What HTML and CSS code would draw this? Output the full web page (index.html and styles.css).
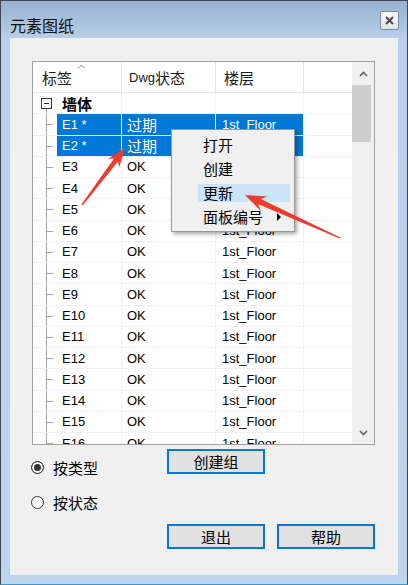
FILE: index.html
```html
<!DOCTYPE html>
<html lang="zh-CN">
<head>
  <meta charset="UTF-8" />
  <title>元素图纸</title>
  <link rel="stylesheet" href="styles.css">
</head>
<body>

<div class="window">
  <!-- Title bar -->
  <div class="titlebar">
    <span class="title">元素图纸</span>
    <span class="close">
      <svg width="9" height="9" viewBox="0 0 9 9"><path d="M1 1 L8 8 M8 1 L1 8" stroke="#4a4a4a" stroke-width="2"/></svg>
    </span>
  </div>

  <div class="client">
    <!-- List view -->
    <div class="list">
      <div class="list-body">
        <div class="row head">
          <div class="cell c1"><span class="zh">标签</span>
            <svg class="sort" width="9" height="5" viewBox="0 0 9 5"><path d="M1 4.5 L4.5 1 L8 4.5" fill="none" stroke="#8a8a8a"/></svg>
          </div>
          <div class="cell c2">Dwg<span class="zh">状态</span></div>
          <div class="cell c3"><span class="zh">楼层</span></div>
          <div class="cell c4"></div>
        </div>

        <div class="row group">
          <div class="cell c1"><span class="gutter root"><span class="toggle"></span></span><span class="label zh">墙体</span></div>
          <div class="cell c2"></div>
          <div class="cell c3"></div>
          <div class="cell c4"></div>
        </div>

        <div class="row sel">
          <div class="cell c1"><span class="gutter"></span><span class="label">E1 *</span></div>
          <div class="cell c2"><span class="zh">过期</span></div>
          <div class="cell c3">1st_Floor</div>
          <div class="cell c4"></div>
        </div>
        <div class="row sel">
          <div class="cell c1"><span class="gutter"></span><span class="label">E2 *</span></div>
          <div class="cell c2"><span class="zh">过期</span></div>
          <div class="cell c3">1st_Floor</div>
          <div class="cell c4"></div>
        </div>
        <div class="row">
          <div class="cell c1"><span class="gutter"></span><span class="label">E3</span></div>
          <div class="cell c2">OK</div><div class="cell c3">1st_Floor</div><div class="cell c4"></div>
        </div>
        <div class="row">
          <div class="cell c1"><span class="gutter"></span><span class="label">E4</span></div>
          <div class="cell c2">OK</div><div class="cell c3">1st_Floor</div><div class="cell c4"></div>
        </div>
        <div class="row">
          <div class="cell c1"><span class="gutter"></span><span class="label">E5</span></div>
          <div class="cell c2">OK</div><div class="cell c3">1st_Floor</div><div class="cell c4"></div>
        </div>
        <div class="row">
          <div class="cell c1"><span class="gutter"></span><span class="label">E6</span></div>
          <div class="cell c2">OK</div><div class="cell c3">1st_Floor</div><div class="cell c4"></div>
        </div>
        <div class="row">
          <div class="cell c1"><span class="gutter"></span><span class="label">E7</span></div>
          <div class="cell c2">OK</div><div class="cell c3">1st_Floor</div><div class="cell c4"></div>
        </div>
        <div class="row">
          <div class="cell c1"><span class="gutter"></span><span class="label">E8</span></div>
          <div class="cell c2">OK</div><div class="cell c3">1st_Floor</div><div class="cell c4"></div>
        </div>
        <div class="row">
          <div class="cell c1"><span class="gutter"></span><span class="label">E9</span></div>
          <div class="cell c2">OK</div><div class="cell c3">1st_Floor</div><div class="cell c4"></div>
        </div>
        <div class="row">
          <div class="cell c1"><span class="gutter"></span><span class="label">E10</span></div>
          <div class="cell c2">OK</div><div class="cell c3">1st_Floor</div><div class="cell c4"></div>
        </div>
        <div class="row">
          <div class="cell c1"><span class="gutter"></span><span class="label">E11</span></div>
          <div class="cell c2">OK</div><div class="cell c3">1st_Floor</div><div class="cell c4"></div>
        </div>
        <div class="row">
          <div class="cell c1"><span class="gutter"></span><span class="label">E12</span></div>
          <div class="cell c2">OK</div><div class="cell c3">1st_Floor</div><div class="cell c4"></div>
        </div>
        <div class="row">
          <div class="cell c1"><span class="gutter"></span><span class="label">E13</span></div>
          <div class="cell c2">OK</div><div class="cell c3">1st_Floor</div><div class="cell c4"></div>
        </div>
        <div class="row">
          <div class="cell c1"><span class="gutter"></span><span class="label">E14</span></div>
          <div class="cell c2">OK</div><div class="cell c3">1st_Floor</div><div class="cell c4"></div>
        </div>
        <div class="row">
          <div class="cell c1"><span class="gutter"></span><span class="label">E15</span></div>
          <div class="cell c2">OK</div><div class="cell c3">1st_Floor</div><div class="cell c4"></div>
        </div>
        <div class="row">
          <div class="cell c1"><span class="gutter"></span><span class="label">E16</span></div>
          <div class="cell c2">OK</div><div class="cell c3">1st_Floor</div><div class="cell c4"></div>
        </div>
      </div>

      <!-- Scrollbar -->
      <div class="scroll">
        <div class="sb-btn">
          <svg width="9" height="6" viewBox="0 0 9 6"><path d="M1 5 L4.5 1.5 L8 5" fill="none" stroke="#606060" stroke-width="1.6"/></svg>
        </div>
        <div class="thumb"></div>
        <div class="track"></div>
        <div class="sb-btn">
          <svg width="9" height="6" viewBox="0 0 9 6"><path d="M1 1 L4.5 4.5 L8 1" fill="none" stroke="#606060" stroke-width="1.6"/></svg>
        </div>
      </div>
    </div>

    <!-- Bottom controls -->
    <div class="bottom">
      <div class="options">
        <label class="radio"><span class="dot checked"></span><span>按类型</span></label>
        <label class="radio"><span class="dot"></span><span>按状态</span></label>
      </div>
      <div class="actions">
        <button class="btn">创建组</button>
        <div class="btn-row">
          <button class="btn">退出</button>
          <button class="btn">帮助</button>
        </div>
      </div>
    </div>
  </div>

  <!-- Context menu -->
  <div class="menu">
    <div class="menu-item">打开</div>
    <div class="menu-item">创建</div>
    <div class="menu-item hover">更新</div>
    <div class="menu-item sub">面板编号<span class="caret"></span></div>
  </div>

  <!-- Annotation arrows -->
  <svg class="marks" width="408" height="585" viewBox="0 0 408 585">
    <polygon fill="#ef3b2d" points="82.6,205.4 118,161.5 119.2,167.4 125,148 108,159 114,158.5 81.4,204.6"/>
    <polygon fill="#ef3b2d" points="340.3,237.4 260.8,198.9 267.4,196.4 245,195 260.8,210.9 258.3,204.3 339.7,238.6"/>
  </svg>
</div>

</body>
</html>
```

FILE: styles.css
```css
* {
  box-sizing: border-box;
}

body {
  margin: 0;
  font-family: "Liberation Sans", "Noto Sans CJK SC", sans-serif;
  background: #fff;
}

.zh {
  font-family: "Noto Sans CJK SC", sans-serif;
  font-size: 15px;
}

.window {
  position: relative;
  width: 408px;
  height: 585px;
  border: 1px solid #3f4650;
  border-bottom-color: #4796c4;
  background: linear-gradient(#97b1cf, #b8d0e9 38px, #bcd4ec);
  display: flex;
  flex-direction: column;
}

/* title bar */
.titlebar {
  height: 37px;
  flex: none;
  display: flex;
  justify-content: space-between;
  align-items: flex-start;
  padding: 10px 8px 0 9px;
}

.title {
  margin-top: 4px;
  line-height: 20px;
  font-family: "Noto Sans CJK SC", sans-serif;
  font-size: 16px;
  color: #111;
}

.close {
  width: 19px;
  height: 19px;
  border: 1px solid #7b8a9c;
  border-radius: 2px;
  background: linear-gradient(#f6f7f9, #dfe5ec);
  display: flex;
  align-items: center;
  justify-content: center;
}

.client {
  flex: none;
  height: 537px;
  margin: 0 9px;
  background: #f0f0f0;
}

/* list view */
.list {
  margin: 23px 0 0 22px;
  width: 343px;
  height: 384px;
  border: 1px solid #a0a0a0;
  background: #fff;
  display: flex;
}

.list-body {
  flex: 1;
  overflow: hidden;
}

.row {
  display: grid;
  grid-template-columns: 89px 94px 88px 1fr;
  height: 21.25px;
  border-bottom: 1px solid #f0f0f0;
  font-size: 13px;
  color: #000;
}

.cell {
  display: flex;
  align-items: center;
  border-right: 1px solid #f0f0f0;
  white-space: nowrap;
  overflow: hidden;
}

.cell.c2 { padding-left: 5px; }
.cell.c3 { padding-left: 6px; }
.cell.c4 { border-right: none; }

.row.head {
  height: 31px;
  border-bottom-color: #e8e8e8;
}

.head .cell {
  border-right-color: #e5e5e5;
  color: #1a1a1a;
}

.head .c1 {
  position: relative;
  padding-left: 9px;
}

.head .c2 { padding-left: 7px; }
.head .c3 { padding-left: 8px; }

.sort {
  position: absolute;
  top: 2px;
  left: 44px;
}

.c1 {
  align-items: stretch;
}

.head .c1 {
  align-items: center;
}

.gutter {
  position: relative;
  flex: none;
  width: 24px;
}

.gutter::before {
  content: "";
  position: absolute;
  left: 13px;
  top: 0;
  bottom: -1px;
  border-left: 1px solid #a6a6a6;
}

.gutter::after {
  content: "";
  position: absolute;
  left: 14px;
  top: 50%;
  width: 6px;
  border-top: 1px solid #a6a6a6;
}

.gutter.root::before {
  top: 50%;
}

.gutter.root::after {
  display: none;
}

.toggle {
  position: absolute;
  left: 8px;
  top: 5px;
  width: 11px;
  height: 11px;
  border: 1px solid #3a3a3a;
  background: #fff;
  z-index: 1;
}

.toggle::after {
  content: "";
  position: absolute;
  left: 2px;
  top: 4px;
  width: 5px;
  border-top: 1px solid #222;
}

.label {
  flex: 1;
  display: flex;
  align-items: center;
  padding-left: 5px;
}

.group .label {
  font-weight: bold;
}

.sel .label,
.sel .c2,
.sel .c3 {
  background: #0078d7;
  color: #fff;
}

.sel {
  border-bottom-color: #e6f0fa;
}

/* scrollbar */
.scroll {
  flex: none;
  width: 22px;
  background: #f0f0f0;
  display: flex;
  flex-direction: column;
}

.sb-btn {
  height: 23px;
  display: flex;
  align-items: center;
  justify-content: center;
}

.thumb {
  width: 19px;
  height: 57px;
  background: #cdcdcd;
}

.track {
  flex: 1;
}

/* bottom controls */
.bottom {
  display: flex;
  padding-left: 21px;
}

.options {
  width: 136px;
  margin-top: 12px;
  display: flex;
  flex-direction: column;
  gap: 15px;
}

.radio {
  height: 20px;
  display: flex;
  align-items: center;
  gap: 9px;
  font-family: "Noto Sans CJK SC", sans-serif;
  font-size: 15px;
  color: #000;
}

.dot {
  width: 13px;
  height: 13px;
  border: 1px solid #333;
  border-radius: 50%;
  background: #fff;
}

.dot.checked {
  background: #333;
  box-shadow: inset 0 0 0 2px #fff;
}

.actions {
  margin-top: 4px;
}

.btn {
  display: block;
  width: 98px;
  height: 25px;
  margin: 0;
  padding: 0;
  border: 2px solid #0078d7;
  background: #e1e1e1;
  font-family: "Noto Sans CJK SC", sans-serif;
  font-size: 15px;
  line-height: 19px;
  color: #000;
}

.btn-row {
  display: flex;
  gap: 12px;
  margin-top: 50px;
}

/* context menu */
.menu {
  position: absolute;
  left: 170px;
  top: 128px;
  width: 124px;
  padding: 6px 4px 5px 26px;
  border: 1px solid #979797;
  background: #f0f0f0;
  box-shadow: 2px 2px 4px rgba(0, 0, 0, 0.35);
  font-family: "Noto Sans CJK SC", sans-serif;
  font-size: 15px;
  color: #000;
  display: flex;
  flex-direction: column;
  gap: 6px;
}

.menu-item {
  height: 18px;
  line-height: 18px;
  padding-left: 5px;
}

.menu-item.hover {
  background: #cce4f7;
}

.menu-item.sub {
  display: flex;
  justify-content: space-between;
  align-items: center;
  padding-right: 9px;
}

.caret {
  width: 0;
  height: 0;
  border-top: 4px solid transparent;
  border-bottom: 4px solid transparent;
  border-left: 4px solid #000;
}

.marks {
  position: absolute;
  left: -1px;
  top: -1px;
  pointer-events: none;
}
```
